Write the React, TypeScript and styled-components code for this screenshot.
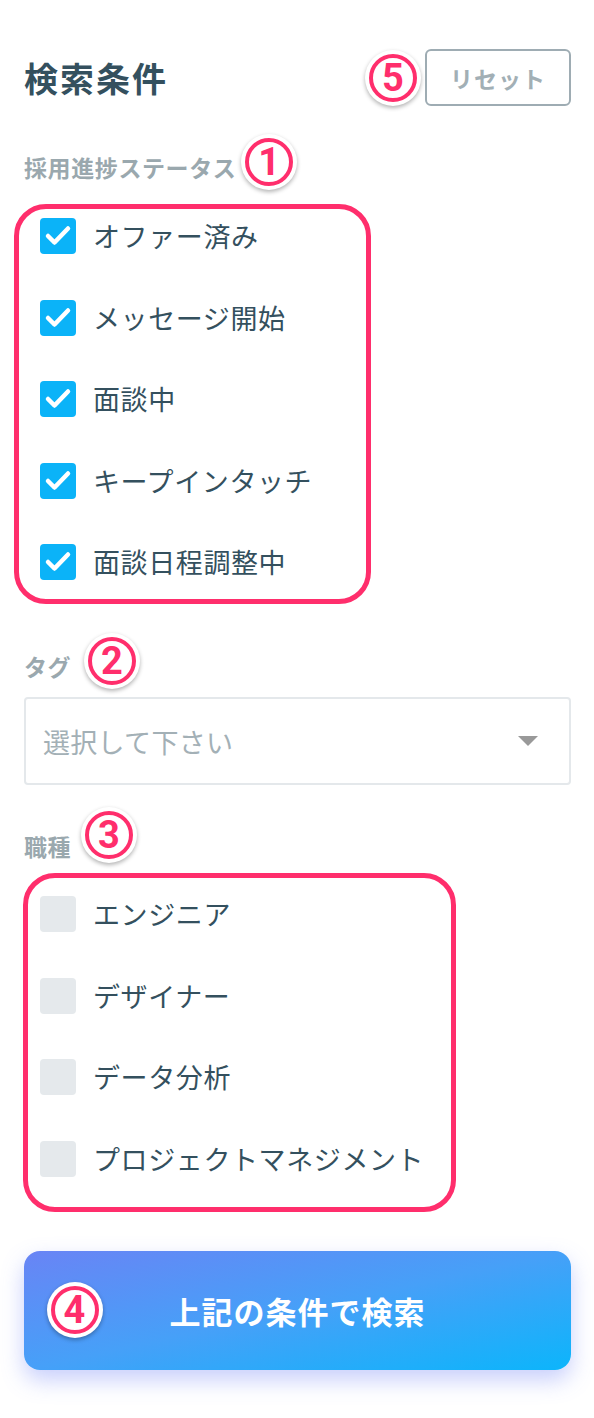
import React, { useState } from "react";
import styled, { createGlobalStyle } from "styled-components";

const GlobalStyle = createGlobalStyle`
  body {
    margin: 0;
    background: #ffffff;
    font-family: "Noto Sans CJK JP", "Noto Sans", sans-serif;
  }
`;

const Panel = styled.div`
  display: flex;
  flex-direction: column;
  padding: 49px 23px 48px 24px;
`;

const Header = styled.div`
  display: flex;
  justify-content: space-between;
  align-items: center;
  height: 57px;
`;

const Title = styled.h2`
  margin: 0;
  font-size: 34px;
  line-height: 1;
  font-weight: 700;
  letter-spacing: 2px;
  color: #34505e;
`;

const ResetWrap = styled.div`
  position: relative;
`;

const ResetButton = styled.button`
  width: 146px;
  height: 57px;
  border: 2px solid #9eacb3;
  border-radius: 6px;
  background: #ffffff;
  color: #a2afb5;
  font-family: "Noto Sans CJK JP", sans-serif;
  font-size: 23px;
  font-weight: 700;
  letter-spacing: 1px;
  cursor: pointer;
`;

const SectionLabel = styled.div<{ $mt: number }>`
  position: relative;
  align-self: flex-start;
  margin-top: ${(p) => p.$mt}px;
  font-size: 23px;
  line-height: 24px;
  font-weight: 700;
  letter-spacing: 0.6px;
  color: #9aa8ae;
`;

// numbered annotation marks
const Badge = styled.span`
  position: absolute;
  width: 56px;
  height: 56px;
  border-radius: 50%;
  background: #ffffff;
  box-shadow: 0 2px 4px rgba(0, 0, 0, 0.3);
  display: flex;
  align-items: center;
  justify-content: center;
  z-index: 2;

  &::before {
    content: "";
    position: absolute;
    inset: 4px;
    border: 4px solid #ff2e6c;
    border-radius: 50%;
  }
`;

const BadgeDigit = styled.span`
  font-family: Roboto, "Liberation Sans", sans-serif;
  font-size: 38px;
  font-weight: 700;
  line-height: 1;
  color: #ff2e6c;
`;

const LabelBadge = styled(Badge)<{ $gap: number; $dy: number }>`
  left: calc(100% + ${(p) => p.$gap}px);
  top: 50%;
  transform: translateY(calc(-50% + ${(p) => p.$dy}px));
`;

const ResetBadge = styled(Badge)`
  right: calc(100% + 4px);
  top: 50%;
  transform: translateY(-50%);
`;

const ButtonBadge = styled(Badge)`
  left: 23px;
  top: 50%;
  transform: translateY(-50%);
`;

const CheckList = styled.div<{ $mt: number }>`
  position: relative;
  display: flex;
  flex-direction: column;
  gap: 45.5px;
  margin-top: ${(p) => p.$mt}px;
  padding-left: 16px;
`;

const Highlight = styled.div<{ $top: number; $left: number; $w: number; $h: number }>`
  position: absolute;
  top: ${(p) => p.$top}px;
  left: ${(p) => p.$left}px;
  width: ${(p) => p.$w}px;
  height: ${(p) => p.$h}px;
  box-sizing: border-box;
  border: 5px solid #ff2e6c;
  border-radius: 32px;
  pointer-events: none;
`;

const Row = styled.label`
  display: flex;
  align-items: center;
  gap: 17px;
  height: 36px;
  cursor: pointer;
`;

const Box = styled.span<{ $checked: boolean }>`
  width: 36px;
  height: 36px;
  flex-shrink: 0;
  border-radius: 4px;
  background: ${(p) => (p.$checked ? "#0bb3f8" : "#e5e9ec")};
  display: flex;
  align-items: center;
  justify-content: center;
`;

const RowText = styled.span`
  font-size: 27px;
  line-height: 36px;
  letter-spacing: 0.6px;
  color: #34505e;
`;

const Select = styled.div`
  margin-top: 19px;
  height: 88px;
  box-sizing: border-box;
  border: 2px solid #e4e8eb;
  border-radius: 4px;
  padding: 0 31px 0 17px;
  display: flex;
  align-items: center;
  justify-content: space-between;
`;

const Placeholder = styled.span`
  font-size: 27px;
  letter-spacing: 0.3px;
  color: #a3b0b6;
`;

const Caret = styled.span`
  width: 0;
  height: 0;
  border-left: 10px solid transparent;
  border-right: 10px solid transparent;
  border-top: 10px solid #999999;
`;

const SearchButton = styled.button`
  position: relative;
  margin-top: 74px;
  height: 119px;
  border: none;
  border-radius: 16px;
  background: linear-gradient(to bottom right, #6984f5 0%, #46a0f8 50%, #0cb5fb 100%);
  box-shadow: 0 10px 22px rgba(98, 118, 246, 0.35);
  color: #ffffff;
  font-family: "Noto Sans CJK JP", sans-serif;
  font-size: 31px;
  font-weight: 700;
  letter-spacing: 1px;
  cursor: pointer;
`;

const CheckMark = () => (
  <svg width="36" height="36" viewBox="0 0 36 36">
    <polyline
      points="8,18 14.5,24.5 28,10.5"
      fill="none"
      stroke="#ffffff"
      strokeWidth="4.5"
      strokeLinecap="round"
      strokeLinejoin="round"
    />
  </svg>
);

const statuses = ["オファー済み", "メッセージ開始", "面談中", "キープインタッチ", "面談日程調整中"];
const jobs = ["エンジニア", "デザイナー", "データ分析", "プロジェクトマネジメント"];

const App: React.FC = () => {
  const [checkedStatus, setCheckedStatus] = useState<string[]>(statuses);
  const [checkedJobs, setCheckedJobs] = useState<string[]>([]);

  const toggle = (list: string[], set: (v: string[]) => void, item: string) => {
    set(list.includes(item) ? list.filter((i) => i !== item) : [...list, item]);
  };

  return (
    <Panel>
      <GlobalStyle />
      <Header>
        <Title>検索条件</Title>
        <ResetWrap>
          <ResetBadge><BadgeDigit>5</BadgeDigit></ResetBadge>
          <ResetButton onClick={() => { setCheckedStatus([]); setCheckedJobs([]); }}>リセット</ResetButton>
        </ResetWrap>
      </Header>

      {/* 採用進捗ステータス */}
      <SectionLabel $mt={49}>
        採用進捗ステータス
        <LabelBadge $gap={5} $dy={-5}><BadgeDigit>1</BadgeDigit></LabelBadge>
      </SectionLabel>
      <CheckList $mt={39}>
        <Highlight $top={-14} $left={-10} $w={357} $h={400} />
        {statuses.map((s) => (
          <Row key={s} onClick={() => toggle(checkedStatus, setCheckedStatus, s)}>
            <Box $checked={checkedStatus.includes(s)}>{checkedStatus.includes(s) && <CheckMark />}</Box>
            <RowText>{s}</RowText>
          </Row>
        ))}
      </CheckList>

      {/* タグ */}
      <SectionLabel $mt={74}>
        タグ
        <LabelBadge $gap={13} $dy={-5}><BadgeDigit>2</BadgeDigit></LabelBadge>
      </SectionLabel>
      <Select>
        <Placeholder>選択して下さい</Placeholder>
        <Caret />
      </Select>

      {/* 職種 */}
      <SectionLabel $mt={49}>
        職種
        <LabelBadge $gap={10} $dy={-11}><BadgeDigit>3</BadgeDigit></LabelBadge>
      </SectionLabel>
      <CheckList $mt={38}>
        <Highlight $top={-23} $left={-1} $w={433} $h={339} />
        {jobs.map((j) => (
          <Row key={j} onClick={() => toggle(checkedJobs, setCheckedJobs, j)}>
            <Box $checked={checkedJobs.includes(j)}>{checkedJobs.includes(j) && <CheckMark />}</Box>
            <RowText>{j}</RowText>
          </Row>
        ))}
      </CheckList>

      <SearchButton>
        <ButtonBadge><BadgeDigit>4</BadgeDigit></ButtonBadge>
        上記の条件で検索
      </SearchButton>
    </Panel>
  );
};

export default App;
